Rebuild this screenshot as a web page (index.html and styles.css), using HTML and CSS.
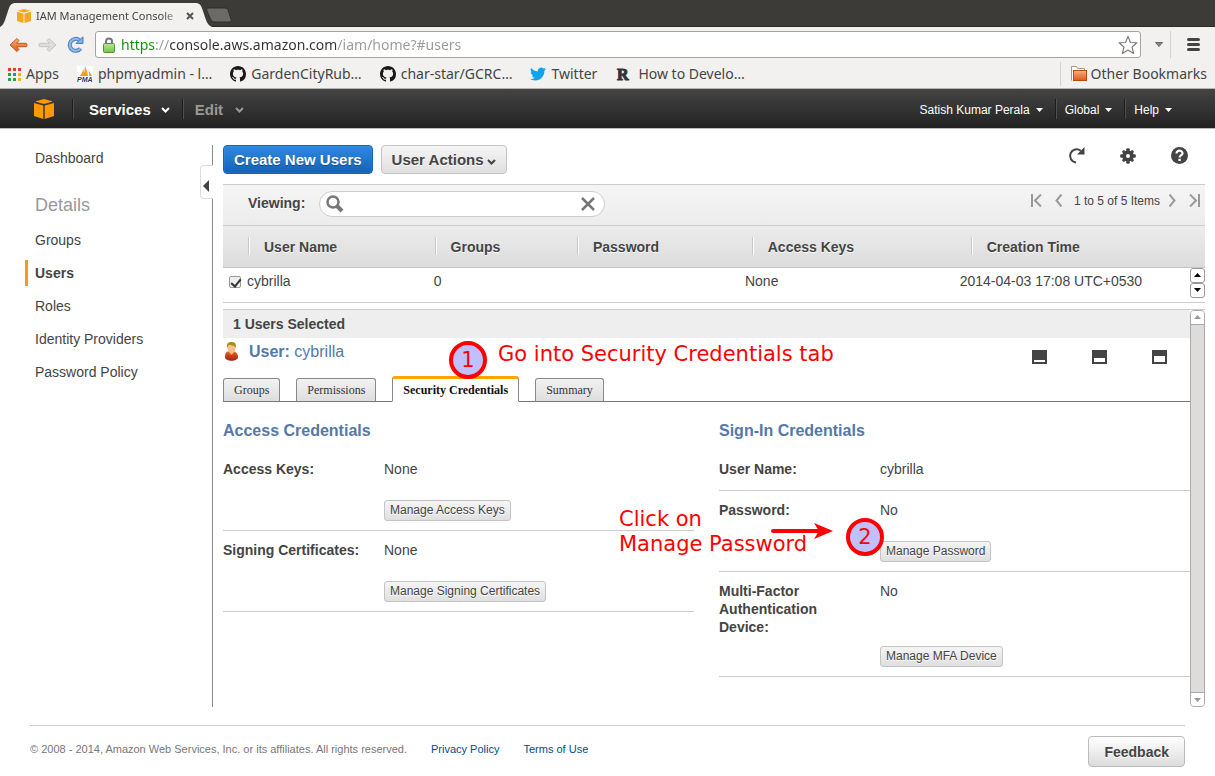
FILE: index.html
```html
<!DOCTYPE html>
<html lang="en">
<head>
<meta charset="utf-8">
<title>IAM Management Console</title>
<link rel="stylesheet" href="styles.css">
</head>
<body>
<svg class="defs" width="0" height="0" aria-hidden="true">
  <defs>
    <linearGradient id="gOrange" x1="0" y1="0" x2="0" y2="1"><stop offset="0" stop-color="#f6b27e"/><stop offset="1" stop-color="#dd5a1c"/></linearGradient>
    <linearGradient id="gGreen" x1="0" y1="0" x2="0" y2="1"><stop offset="0" stop-color="#b9e69a"/><stop offset="1" stop-color="#74c24c"/></linearGradient>
    <linearGradient id="gRed" x1="0" y1="0" x2="0" y2="1"><stop offset="0" stop-color="#e8642a"/><stop offset="1" stop-color="#a8200c"/></linearGradient>
    <symbol id="github" viewBox="0 0 16 16"><path fill="#1b1817" d="M8 0C3.58 0 0 3.58 0 8c0 3.54 2.29 6.53 5.47 7.59.4.07.55-.17.55-.38 0-.19-.01-.82-.01-1.49-2.01.37-2.53-.49-2.69-.94-.09-.23-.48-.94-.82-1.13-.28-.15-.68-.52-.01-.53.63-.01 1.08.58 1.23.82.72 1.21 1.87.87 2.33.66.07-.52.28-.87.51-1.07-1.78-.2-3.64-.89-3.64-3.95 0-.87.31-1.59.82-2.15-.08-.2-.36-1.02.08-2.12 0 0 .67-.21 2.2.82.64-.18 1.32-.27 2-.27s1.36.09 2 .27c1.53-1.04 2.2-.82 2.2-.82.44 1.1.16 1.92.08 2.12.51.56.82 1.27.82 2.15 0 3.07-1.87 3.75-3.65 3.95.29.25.54.73.54 1.48 0 1.07-.01 1.93-.01 2.2 0 .21.15.46.55.38A8.01 8.01 0 0 0 16 8c0-4.42-3.58-8-8-8z"/></symbol>
    <symbol id="cube" viewBox="0 0 20 20"><path d="M10 0 19 2.500 10 5 1 2.500ZM0 4 9.300 6.500V20L0 17ZM20 4 10.700 6.500V20L20 17Z"/></symbol>
    <symbol id="caret" viewBox="0 0 7 4"><path fill="currentColor" d="M0 0h7L3.500 4z"/></symbol>
    <symbol id="chevron" viewBox="0 0 9 6"><path d="M1 1l3.500 3.500L8 1" fill="none" stroke="currentColor" stroke-width="2"/></symbol>
  </defs>
</svg>

<header class="browser">
  <div class="tabstrip">
    <div class="browser-tab">
      <svg class="tab-shape" width="212" height="27" viewBox="0 0 212 27"><path fill="#f2f1f0" d="M0 27C4 25 5 20 8 11C10 5 11 3 16 3H195C200 3 201 5 203 11C206 20 207 25 212 27Z"/></svg>
      <svg class="favicon" width="14" height="14" fill="#f5a81c"><use href="#cube"/></svg>
      <span class="tab-title">IAM Management Console</span>
      <button class="plain" aria-label="Close tab"><svg width="8" height="8" viewBox="0 0 8 8"><path d="M1 1l6 6M7 1L1 7" stroke="#555" stroke-width="2"/></svg></button>
    </div>
    <button class="plain new-tab" aria-label="New tab"><svg width="26" height="16" viewBox="0 0 26 16"><path d="M2 1h17c3 0 3 2 4 5l2 6c1 2 0 3-2 3H9c-3 0-4-2-5-4L1 4C0 2 1 1 2 1z" fill="#6b6a66" stroke="#2f2e2b"/></svg></button>
  </div>
  <div class="toolbar">
    <button class="plain" aria-label="Back"><svg width="19" height="16" viewBox="0 0 19 16"><path d="M1 8L8 1.500 10 3.500 7.500 6.300H17Q18 6.300 18 8T17 9.700H7.500L10 12.500 8 14.500Z" fill="url(#gOrange)" stroke="#c9541c"/></svg></button>
    <button class="plain" aria-label="Forward"><svg width="19" height="16" viewBox="0 0 19 16"><path d="M18 8L11 1.500 9 3.500 11.500 6.300H2Q1 6.300 1 8T2 9.700H11.500L9 12.500 11 14.500Z" fill="#dedddb" stroke="#c6c4c1"/></svg></button>
    <button class="plain reload" aria-label="Reload"><svg width="17" height="17" viewBox="0 0 17 17"><path d="M13.500 12.500A6 6 0 1 1 12.500 4.200" fill="none" stroke="#4a80bf" stroke-width="4"/><path d="M13.500 12.500A6 6 0 1 1 12.500 4.200" fill="none" stroke="#8fbbe8" stroke-width="2"/><path d="M9 7.500h7V.8L13.500 3z" fill="#7fb0e2" stroke="#4a80bf"/></svg></button>
    <label class="address">
      <svg width="12" height="16" viewBox="0 0 12 16"><path d="M3 8V4.500a3 3 0 0 1 6 0V8" fill="none" stroke="#777" stroke-width="2"/><rect x=".5" y="6.500" width="11" height="9" rx="1" fill="url(#gGreen)" stroke="#4d9a2a"/></svg>
      <input class="url" type="text" aria-label="Address" value="https://console.aws.amazon.com/iam/home?#users">
      <svg width="20" height="20" viewBox="0 0 18 18"><path d="M9 1.200l2.200 5.500 5.800.3-4.400 3.800 1.500 5.900L9 13.500 3.900 16.700l1.500-5.900L1 7l5.800-.3z" fill="#fff" stroke="#777" stroke-linejoin="round"/></svg>
    </label>
    <button class="plain dropdown" aria-label="Bookmarks list"><svg width="8" height="5" viewBox="0 0 8 5"><path d="M.5.500h7L4 4.500z" fill="#888" stroke="#666"/></svg></button>
    <button class="plain menu" aria-label="Menu"><svg width="13" height="13" viewBox="0 0 13 13"><path d="M1.500 1.500h10M1.500 6.500h10M1.500 11.500h10" stroke="#444" stroke-width="3" stroke-linecap="round"/></svg></button>
  </div>
  <nav class="bookmarks" aria-label="Bookmarks">
    <a href="#apps"><svg width="13" height="13" viewBox="0 0 13 13"><path fill="#e8382f" d="M0 0h3v3H0zM5 0h3v3H5zM10 0h3v3h-3z"/><path fill="#2a9d4e" d="M0 5h3v3H0zM0 10h3v3H0z"/><path fill="#2a7de1" d="M5 5h3v3H5z"/><path fill="#f2b416" d="M10 5h3v3h-3zM10 10h3v3h-3z"/><path fill="#2a9d4e" d="M5 10h3v3H5z"/></svg>Apps</a>
    <a href="#pma"><svg width="16" height="16" viewBox="0 0 16 16"><rect width="16" height="16" fill="#fff"/><path d="M2 10Q6 8 6 2L8 10zM7 10L8 0Q10 4 11 10zM12 10Q13 6 11 3L15 10z" fill="#f39a1f"/><text x="0" y="16" class="pma-text">PMA</text></svg>phpmyadmin - l…</a>
    <a href="#gcrb"><svg width="16" height="16"><use href="#github"/></svg>GardenCityRub…</a>
    <a href="#gcrc"><svg width="16" height="16"><use href="#github"/></svg>char-star/GCRC…</a>
    <a href="#twitter"><svg width="16" height="16" viewBox="0 0 24 24"><path fill="#0ea5ea" d="M23.954 4.569a10 10 0 0 1-2.825.775 4.958 4.958 0 0 0 2.163-2.723c-.951.555-2.005.959-3.127 1.184a4.920 4.920 0 0 0-8.384 4.482C7.691 8.094 4.066 6.130 1.640 3.161a4.822 4.822 0 0 0-.666 2.475c0 1.710.870 3.213 2.188 4.096a4.904 4.904 0 0 1-2.228-.616v.061a4.923 4.923 0 0 0 3.946 4.827 4.996 4.996 0 0 1-2.212.085 4.937 4.937 0 0 0 4.604 3.417 9.868 9.868 0 0 1-6.102 2.105c-.390 0-.779-.023-1.170-.067a13.995 13.995 0 0 0 7.557 2.209c9.054 0 13.999-7.496 13.999-13.986 0-.209 0-.420-.015-.630a9.936 9.936 0 0 0 2.460-2.548z"/></svg>Twitter</a>
    <a href="#howto"><svg width="18" height="16" viewBox="0 0 18 16"><text x="2" y="14" class="r-text">R</text></svg>How to Develo…</a>
    <a href="#other" class="other"><svg width="16" height="16" viewBox="0 0 16 16"><path d="M.5 14.500v-14h5l1 2h7v3" fill="#fff" stroke="#999"/><rect x="2.500" y="4.500" width="13" height="10" fill="url(#gOrange)" stroke="#b84814"/></svg>Other Bookmarks</a>
  </nav>
</header>

<nav class="console-nav" aria-label="Console">
  <a class="logo" href="#home" aria-label="Console home"><svg width="20" height="20" fill="#ff9900"><use href="#cube"/></svg></a>
  <button class="plain nav-main">Services<svg width="9" height="6"><use href="#chevron"/></svg></button>
  <button class="plain nav-main dim">Edit<svg width="9" height="6"><use href="#chevron"/></svg></button>
  <div class="nav-right">
    <button class="plain nav-item">Satish Kumar Perala<svg width="7" height="4"><use href="#caret"/></svg></button>
    <button class="plain nav-item">Global<svg width="7" height="4"><use href="#caret"/></svg></button>
    <button class="plain nav-item">Help<svg width="7" height="4"><use href="#caret"/></svg></button>
  </div>
</nav>

<div class="console">
  <aside class="sidebar">
    <a href="#dashboard">Dashboard</a>
    <h2>Details</h2>
    <a href="#groups">Groups</a>
    <a href="#users" class="current" aria-current="page">Users</a>
    <a href="#roles">Roles</a>
    <a href="#providers">Identity Providers</a>
    <a href="#policy">Password Policy</a>
    <button class="plain collapse" aria-label="Collapse sidebar"><svg width="6" height="12" viewBox="0 0 6 12"><path d="M6 0v12L0 6z" fill="#444"/></svg></button>
  </aside>

  <main class="content">
    <div class="actions">
      <button class="btn primary">Create New Users</button>
      <button class="btn">User Actions<svg width="9" height="6"><use href="#chevron"/></svg></button>
      <div class="action-icons">
        <button class="plain" aria-label="Refresh"><svg width="17" height="17" viewBox="0 0 17 17"><path d="M8 15.500A6.600 6.600 0 1 1 12.800 3.800" fill="none" stroke="#444" stroke-width="2"/><path d="M9 7.500h7.500V0z" fill="#444"/></svg></button>
        <button class="plain" aria-label="Settings"><svg width="16" height="16" viewBox="-8 -8 16 16"><g fill="#444"><circle r="5.800"/><rect x="-1.800" y="-7.800" width="3.600" height="15.600" rx="1"/><rect x="-7.800" y="-1.800" width="15.600" height="3.600" rx="1"/><g transform="rotate(45)"><rect x="-1.500" y="-7.400" width="3" height="14.800" rx="1"/><rect x="-7.400" y="-1.500" width="14.800" height="3" rx="1"/></g></g><circle r="2" fill="#fff"/></svg></button>
        <button class="plain" aria-label="Help"><svg width="17" height="17" viewBox="0 0 17 17"><circle cx="8.500" cy="8.500" r="8.500" fill="#444"/><path d="M5.500 6.500C5.500 2.500 11.700 3 11.500 6.500C11.400 8.200 8.600 8 8.600 10.500" fill="none" stroke="#fff" stroke-width="2.200"/><rect x="7.400" y="11.800" width="2.400" height="2.200" fill="#fff"/></svg></button>
      </div>
    </div>

    <div class="filter">
      <label for="viewing">Viewing:</label>
      <div class="search">
        <svg width="18" height="18" viewBox="0 0 18 18"><circle cx="7" cy="7" r="5.500" fill="none" stroke="#777" stroke-width="2.500"/><path d="M11 11l5 5" stroke="#777" stroke-width="4"/></svg>
        <input id="viewing" type="text">
        <button class="plain" aria-label="Clear"><svg width="14" height="14" viewBox="0 0 14 14"><path d="M1 1l12 12M13 1L1 13" stroke="#777" stroke-width="2.500"/></svg></button>
      </div>
      <div class="pager">
        <button class="plain" aria-label="First"><svg width="11" height="13" viewBox="0 0 11 13"><path d="M1 0v13M10 .5l-6 6 6 6" fill="none" stroke="#999" stroke-width="2"/></svg></button>
        <button class="plain" aria-label="Previous"><svg width="7" height="13" viewBox="0 0 7 13"><path d="M6.500.5l-5 6 5 6" fill="none" stroke="#999" stroke-width="2"/></svg></button>
        <span>1 to 5 of 5 Items</span>
        <button class="plain" aria-label="Next"><svg width="7" height="13" viewBox="0 0 7 13"><path d="M.5.500l5 6-5 6" fill="none" stroke="#999" stroke-width="2"/></svg></button>
        <button class="plain" aria-label="Last"><svg width="11" height="13" viewBox="0 0 11 13"><path d="M10 0v13M1 .5l6 6-6 6" fill="none" stroke="#999" stroke-width="2"/></svg></button>
      </div>
    </div>

    <table class="grid-head">
      <colgroup><col class="h0"><col class="h1"><col class="h2"><col class="h3"><col class="h4"><col></colgroup>
      <thead><tr><td></td><th scope="col">User Name</th><th scope="col">Groups</th><th scope="col">Password</th><th scope="col">Access Keys</th><th scope="col">Creation Time</th></tr></thead>
    </table>
    <div class="grid-body">
      <table>
        <colgroup><col class="b0"><col class="b1"><col class="b2"><col class="b3"><col class="b4"><col></colgroup>
        <tbody><tr>
          <td><input type="checkbox" id="u1" checked></td>
          <td><label for="u1">cybrilla</label></td><td>0</td><td></td><td>None</td><td>2014-04-03 17:08 UTC+0530</td>
        </tr></tbody>
      </table>
      <div class="stepper">
        <button class="plain" aria-label="Scroll up"><svg width="7" height="4" viewBox="0 0 7 4"><path d="M0 4h7L3.500 0z"/></svg></button>
        <button class="plain" aria-label="Scroll down"><svg width="7" height="4" viewBox="0 0 7 4"><path d="M0 0h7L3.500 4z"/></svg></button>
      </div>
    </div>

    <section class="details">
      <div class="details-main">
        <h3 class="selected">1 Users Selected</h3>
        <div class="user">
          <svg width="17" height="19" viewBox="0 0 17 19"><path d="M2 15C2 10 4 9 8 9s7 2 7 6c0 5-13 5-13 0z" fill="url(#gRed)"/><path d="M5 9l3.500 4L12 9z" fill="#f3b36a"/><ellipse cx="8.500" cy="6" rx="4" ry="4.800" fill="#f3c287"/><path d="M4 6C3 0 7 0 9 0c4 0 4 3 4 6-2-3-5-3-7-3-1 0-1 2-2 3z" fill="#a98a1c"/></svg>
          <span class="user-name"><strong>User:</strong> cybrilla</span>
          <div class="panel-icons">
            <button class="plain" aria-label="Minimize panel"><svg width="15" height="14" viewBox="0 0 15 14"><path fill="#444" d="M0 0h15v14H0z"/><path fill="#fff" d="M2 10h11v2H2z"/></svg></button>
            <button class="plain" aria-label="Half panel"><svg width="15" height="14" viewBox="0 0 15 14"><path fill="#444" d="M0 0h15v14H0z"/><path fill="#fff" d="M2 8h11v4H2z"/></svg></button>
            <button class="plain" aria-label="Full panel"><svg width="15" height="14" viewBox="0 0 15 14"><path fill="#444" d="M0 0h15v14H0z"/><path fill="#fff" d="M2 6h11v6H2z"/></svg></button>
          </div>
        </div>
        <div class="tabs" role="tablist">
          <button role="tab">Groups</button>
          <button role="tab">Permissions</button>
          <button role="tab" class="active" aria-selected="true">Security Credentials</button>
          <button role="tab">Summary</button>
        </div>
        <div class="columns">
          <section>
            <h3>Access Credentials</h3>
            <div class="field">
              <b>Access Keys:</b><span>None</span>
              <button class="btn small">Manage Access Keys</button>
            </div>
            <div class="field">
              <b>Signing Certificates:</b><span>None</span>
              <button class="btn small">Manage Signing Certificates</button>
            </div>
          </section>
          <section>
            <h3>Sign-In Credentials</h3>
            <div class="field"><b>User Name:</b><span>cybrilla</span></div>
            <div class="field">
              <b>Password:</b><span>No</span>
              <button class="btn small">Manage Password</button>
            </div>
            <div class="field">
              <b>Multi-Factor Authentication Device:</b><span>No</span>
              <button class="btn small">Manage MFA Device</button>
            </div>
          </section>
        </div>
        <span class="badge badge-one">1</span>
        <p class="note note-one">Go into Security Credentials tab</p>
        <p class="note note-two">Click on<br>Manage Password</p>
        <svg class="arrow" width="62" height="16" viewBox="0 0 62 16"><path d="M2 8h48" stroke="red" stroke-width="4" stroke-linecap="round"/><path d="M43 0l19 8-19 8 5-8z" fill="red"/></svg>
        <span class="badge badge-two">2</span>
      </div>
      <div class="scrollbar">
        <button class="plain" aria-label="Scroll up"><svg width="7" height="4" viewBox="0 0 7 4"><path fill="#999" d="M0 4h7L3.500 0z"/></svg></button>
        <button class="plain" aria-label="Scroll down"><svg width="7" height="4" viewBox="0 0 7 4"><path fill="#999" d="M0 0h7L3.500 4z"/></svg></button>
      </div>
    </section>
  </main>
</div>

<footer class="footer">
  <span>© 2008 - 2014, Amazon Web Services, Inc. or its affiliates. All rights reserved.</span>
  <a href="#privacy">Privacy Policy</a>
  <a href="#terms">Terms of Use</a>
  <button class="btn feedback">Feedback</button>
</footer>
</body>
</html>
```
FILE: styles.css
```css
* { box-sizing: border-box; }
body {
  margin: 0;
  min-height: 100vh;
  display: flex;
  flex-direction: column;
  background: #fff;
  color: #444;
  font: 14px/18px "Liberation Sans", Arial, sans-serif;
}
h2, h3, p { margin: 0; }
a { text-decoration: none; color: inherit; }
svg { display: block; flex: none; }
.defs { position: absolute; }
button, input { font: inherit; color: inherit; }
.plain {
  display: flex;
  align-items: center;
  justify-content: center;
  padding: 0;
  border: 0;
  background: none;
}

/* browser frame */
.browser {
  background: #f2f1f0;
  border-bottom: 1px solid #b6b5b3;
  font-family: "Noto Sans", "Open Sans", sans-serif;
}
.tabstrip {
  display: flex;
  height: 27px;
  background: #3c3b37;
  border-bottom: 1px solid #2b2a27;
}
.browser-tab {
  position: relative;
  display: flex;
  align-items: center;
  width: 206px;
  height: 27px;
  padding: 4px 12px 0 17px;
  gap: 5px;
  font-size: 11px;
}
.browser-tab > * { position: relative; }
.browser-tab .tab-shape { position: absolute; left: 0; top: 0; }
.tab-title {
  flex: 1;
  white-space: nowrap;
  mask-image: linear-gradient(90deg, #000 88%, transparent);
}
.new-tab { height: 16px; margin-top: 7px; }
.toolbar {
  display: flex;
  align-items: center;
  gap: 10px;
  padding: 4px 15px 0 9px;
}
.reload { margin-right: 1px; }
.address {
  flex: 1;
  display: flex;
  align-items: center;
  gap: 6px;
  height: 27px;
  padding: 0 2px 0 7px;
  border: 1px solid #a5a4a1;
  border-radius: 3px;
  background: #fff;
}
.url {
  flex: 1;
  min-width: 0;
  padding: 0;
  border: 0;
  outline: 0;
  font-size: 14px;
  color: transparent;
  background: linear-gradient(90deg, #0a9400 34px, #999 34px 48px, #333 48px 215px, #999 215px);
  background-clip: text;
}
.dropdown { width: 15px; }
.menu { height: 27px; padding-left: 16px; border-left: 1px solid #d4d3d1; margin-left: -6px; }
.bookmarks {
  display: flex;
  align-items: center;
  gap: 18px;
  height: 30px;
  padding: 2px 8px 0 8px;
  font-size: 14px;
}
.bookmarks a { display: flex; align-items: center; gap: 5px; white-space: nowrap; }
.bookmarks .other { margin-left: auto; height: 24px; padding-left: 10px; border-left: 1px solid #d4d3d1; gap: 4px; }
.pma-text { font: italic bold 7px "Liberation Sans", sans-serif; fill: #33335c; }
.r-text { font: bold 16px "Liberation Serif", serif; fill: #333; stroke: #333; }

/* console header */
.console-nav {
  display: flex;
  align-items: center;
  height: 40px;
  padding: 0 33px 0 34px;
  background: linear-gradient(#444, #222);
  border-bottom: 1px solid #bbb;
  color: #fff;
  text-shadow: 0 1px 1px #000;
}
.logo { margin-right: 18px; }
.nav-main, .nav-item { height: 20px; padding-top: 2px; }
.nav-main, .nav-item + .nav-item { border-left: 1px solid #1c1c1c; box-shadow: inset 1px 0 #505050; }
.nav-main { gap: 10px; padding-right: 12px; padding-left: 16px; font-size: 15px; font-weight: bold; }
.nav-main.dim { padding-left: 12px; gap: 12px; color: #999; }
.nav-right { display: flex; margin-left: auto; }
.nav-item { gap: 6px; padding-right: 12px; padding-left: 9px; font-size: 12px; }
.nav-item:last-child { padding-right: 10px; }

/* page columns */
.console { flex: 1; display: flex; padding: 16px 10px 0 0; }
.sidebar {
  position: relative;
  flex: none;
  display: flex;
  flex-direction: column;
  gap: 7px;
  width: 213px;
  padding-left: 25px;
  border-right: 1px solid #888;
}
.sidebar a { height: 26px; padding-left: 7px; line-height: 26px; border-left: 3px solid transparent; }
.sidebar .current { border-left-color: #ff9912; font-weight: bold; }
.sidebar h2 { padding: 16px 0 0 10px; height: 42px; font-size: 18px; line-height: 22px; font-weight: normal; color: #999; }
.collapse {
  position: absolute;
  right: -1px;
  top: 20px;
  width: 13px;
  height: 34px;
  padding: 8px 2px 0 0;
  border: 1px solid #ddd;
  border-right: 0;
  border-radius: 4px 0 0 4px;
  background: #fff;
}
.content { flex: 1; min-width: 0; display: flex; flex-direction: column; padding-left: 10px; }

.btn {
  display: inline-flex;
  align-items: center;
  gap: 3px;
  height: 29px;
  padding: 0 10px;
  border: 1px solid #c4c4c4;
  border-radius: 4px;
  background: linear-gradient(#f5f5f5, #dfdfdf);
  font-size: 15px;
  font-weight: bold;
  color: #444;
  white-space: nowrap;
  text-shadow: 0 1px #fff;
}
.btn svg { margin-top: 5px; }
.primary {
  color: #fff;
  border-color: #1a62b3;
  background: linear-gradient(#2f89e0, #1263b9);
  box-shadow: inset 0 0 1px #7ab6f0;
  text-shadow: 0 1px 1px #134a85;
}
.small { height: 21px; padding: 0 5px; border-radius: 3px; font-size: 12px; font-weight: normal; }
.feedback { height: 31px; padding: 0 15px; font-size: 14px; margin-left: auto; background: linear-gradient(#fff, #dcdcdc); border-color: #bbb; }

.actions { display: flex; gap: 8px; }
.action-icons { display: flex; align-items: center; gap: 35px; margin: 0 17px 8px auto; }

.filter {
  display: flex;
  align-items: flex-start;
  margin-top: 10px;
  height: 42px;
  padding: 6px 5px 0 25px;
  border: solid #ccc;
  border-width: 1px 0;
  background: linear-gradient(#f5f5f5, #ececec);
}
.filter label { margin: 3px 14px 0 0; font-weight: bold; text-shadow: 0 1px #fff; }
.search {
  display: flex;
  align-items: center;
  width: 286px;
  height: 26px;
  padding: 0 9px 0 6px;
  border: 1px solid #ccc;
  border-radius: 13px;
  background: #fff;
}
.search input { flex: 1; min-width: 0; border: 0; outline: 0; background: none; }
.pager { display: flex; align-items: center; gap: 13px; height: 19px; margin-left: auto; font-size: 12px; }
.pager span { margin: 0 -4px 0 -1px; }

table { width: 100%; border-collapse: collapse; table-layout: fixed; }
th, td { padding: 0; text-align: left; white-space: nowrap; }
.grid-head { background: linear-gradient(#ececec, #dcdcdc); border-bottom: 1px solid #c4c4c4; }
.grid-head tr { height: 41px; }
.grid-head th {
  padding: 2px 0 0 16px;
  text-shadow: 0 1px #fff;
  background: linear-gradient(#c8c8c8, #c8c8c8) 0 50% / 1px 18px no-repeat, linear-gradient(#fff, #fff) 1px 50% / 1px 18px no-repeat;
}
.h0 { width: 25px; } .h1 { width: 19%; } .h2 { width: 14.500%; } .h3 { width: 17.800%; } .h4 { width: 22.300%; }
.b0 { width: 24px; } .b1 { width: 19.300%; } .b2 { width: 14.300%; } .b3 { width: 17.900%; } .b4 { width: 22.200%; }
.grid-body { display: flex; height: 35px; border-bottom: 1px solid #ccc; }
.grid-body tr { height: 27px; }
.grid-body table { flex: 1; align-self: flex-start; }
input[type="checkbox"] {
  appearance: none;
  display: block;
  width: 12px;
  height: 12px;
  margin: 2px 0 0 6px;
  border: 1px solid #999;
  border-radius: 2px;
  background: #eee;
}
input[type="checkbox"]:checked::before {
  content: "";
  display: block;
  width: 4px;
  height: 8px;
  margin: 0 0 0 3px;
  border: solid #333;
  border-width: 0 2px 2px 0;
  rotate: 40deg;
}
.stepper { flex: none; width: 15px; }
.stepper button { width: 15px; height: 15px; border: 1px solid #999; border-radius: 3px; }

/* selected user */
.details { flex: 1; display: flex; margin-top: 6px; border-top: 1px solid #ccc; }
.details-main { position: relative; flex: 1; min-width: 0; }
.selected { height: 28px; padding-left: 10px; font-size: 14px; line-height: 28px; background: #eee; }
.user { display: flex; align-items: center; height: 28px; }
.user-name { margin-left: 9px; font-size: 16px; color: #5479a8; }
.panel-icons { display: flex; gap: 45px; margin: 10px 23px 0 auto; }
.tabs { display: flex; align-items: flex-end; gap: 16px; height: 26px; margin-top: 10px; border-bottom: 1px solid #777; }
.tabs button {
  height: 24px;
  margin-bottom: -1px;
  padding: 0 10px;
  border: 1px solid #888;
  border-bottom-color: #777;
  border-radius: 3px 3px 0 0;
  background: linear-gradient(#f2f2f2, #dedede);
  font: 12px/16px "Liberation Serif", "Times New Roman", serif;
  color: #333;
}
.tabs .active { height: 26px; border-top: 3px solid #ffa500; border-bottom-color: #fff; background: #fff; font-weight: bold; color: #111; }
.columns { display: grid; grid-template-columns: 1fr 1fr; gap: 25px; padding-top: 20px; }
.columns h3 { margin-bottom: 10px; font-size: 16px; color: #5479a8; }
.field { display: grid; grid-template-columns: 161px 1fr; padding-top: 10px; border-bottom: 1px solid #ccc; }
.field b { padding-right: 20px; }
.field span { padding-bottom: 12px; }
.field .btn { grid-column: 2; justify-self: start; margin: 10px 0 9px; }
.scrollbar {
  display: flex;
  flex-direction: column;
  justify-content: space-between;
  width: 15px;
  border: 1px solid #aaa;
  border-radius: 4px;
  background: #dddcda;
}
.scrollbar button { width: 13px; height: 14px; background: #fff; border-bottom: 1px solid #aaa; border-radius: 3px 3px 0 0; }
.scrollbar button:last-child { border-bottom: 0; border-top: 1px solid #aaa; border-radius: 0 0 3px 3px; }

/* walkthrough callouts laid over the page */
.note { position: absolute; font: 21px/25px "DejaVu Sans", sans-serif; color: red; white-space: nowrap; }
.note-one { left: 275px; top: 32px; }
.note-two { left: 396px; top: 197px; }
.arrow { position: absolute; left: 548px; top: 213px; }
.badge {
  position: absolute;
  width: 38px;
  height: 38px;
  border: 4px solid red;
  border-radius: 50%;
  background: #c0c0ff;
  color: red;
  font: 21px/30px "DejaVu Sans", sans-serif;
  text-align: center;
}
.badge-one { left: 226px; top: 31px; }
.badge-two { left: 623px; top: 208px; }

.footer {
  display: flex;
  align-items: center;
  margin: 18px 30px 0;
  padding: 10px 0 9px;
  border-top: 1px solid #ccc;
  font-size: 11px;
  color: #777;
}
.footer span, .footer a { padding-bottom: 5px; }
.footer a { margin-left: 24px; color: #004b91; }
```
